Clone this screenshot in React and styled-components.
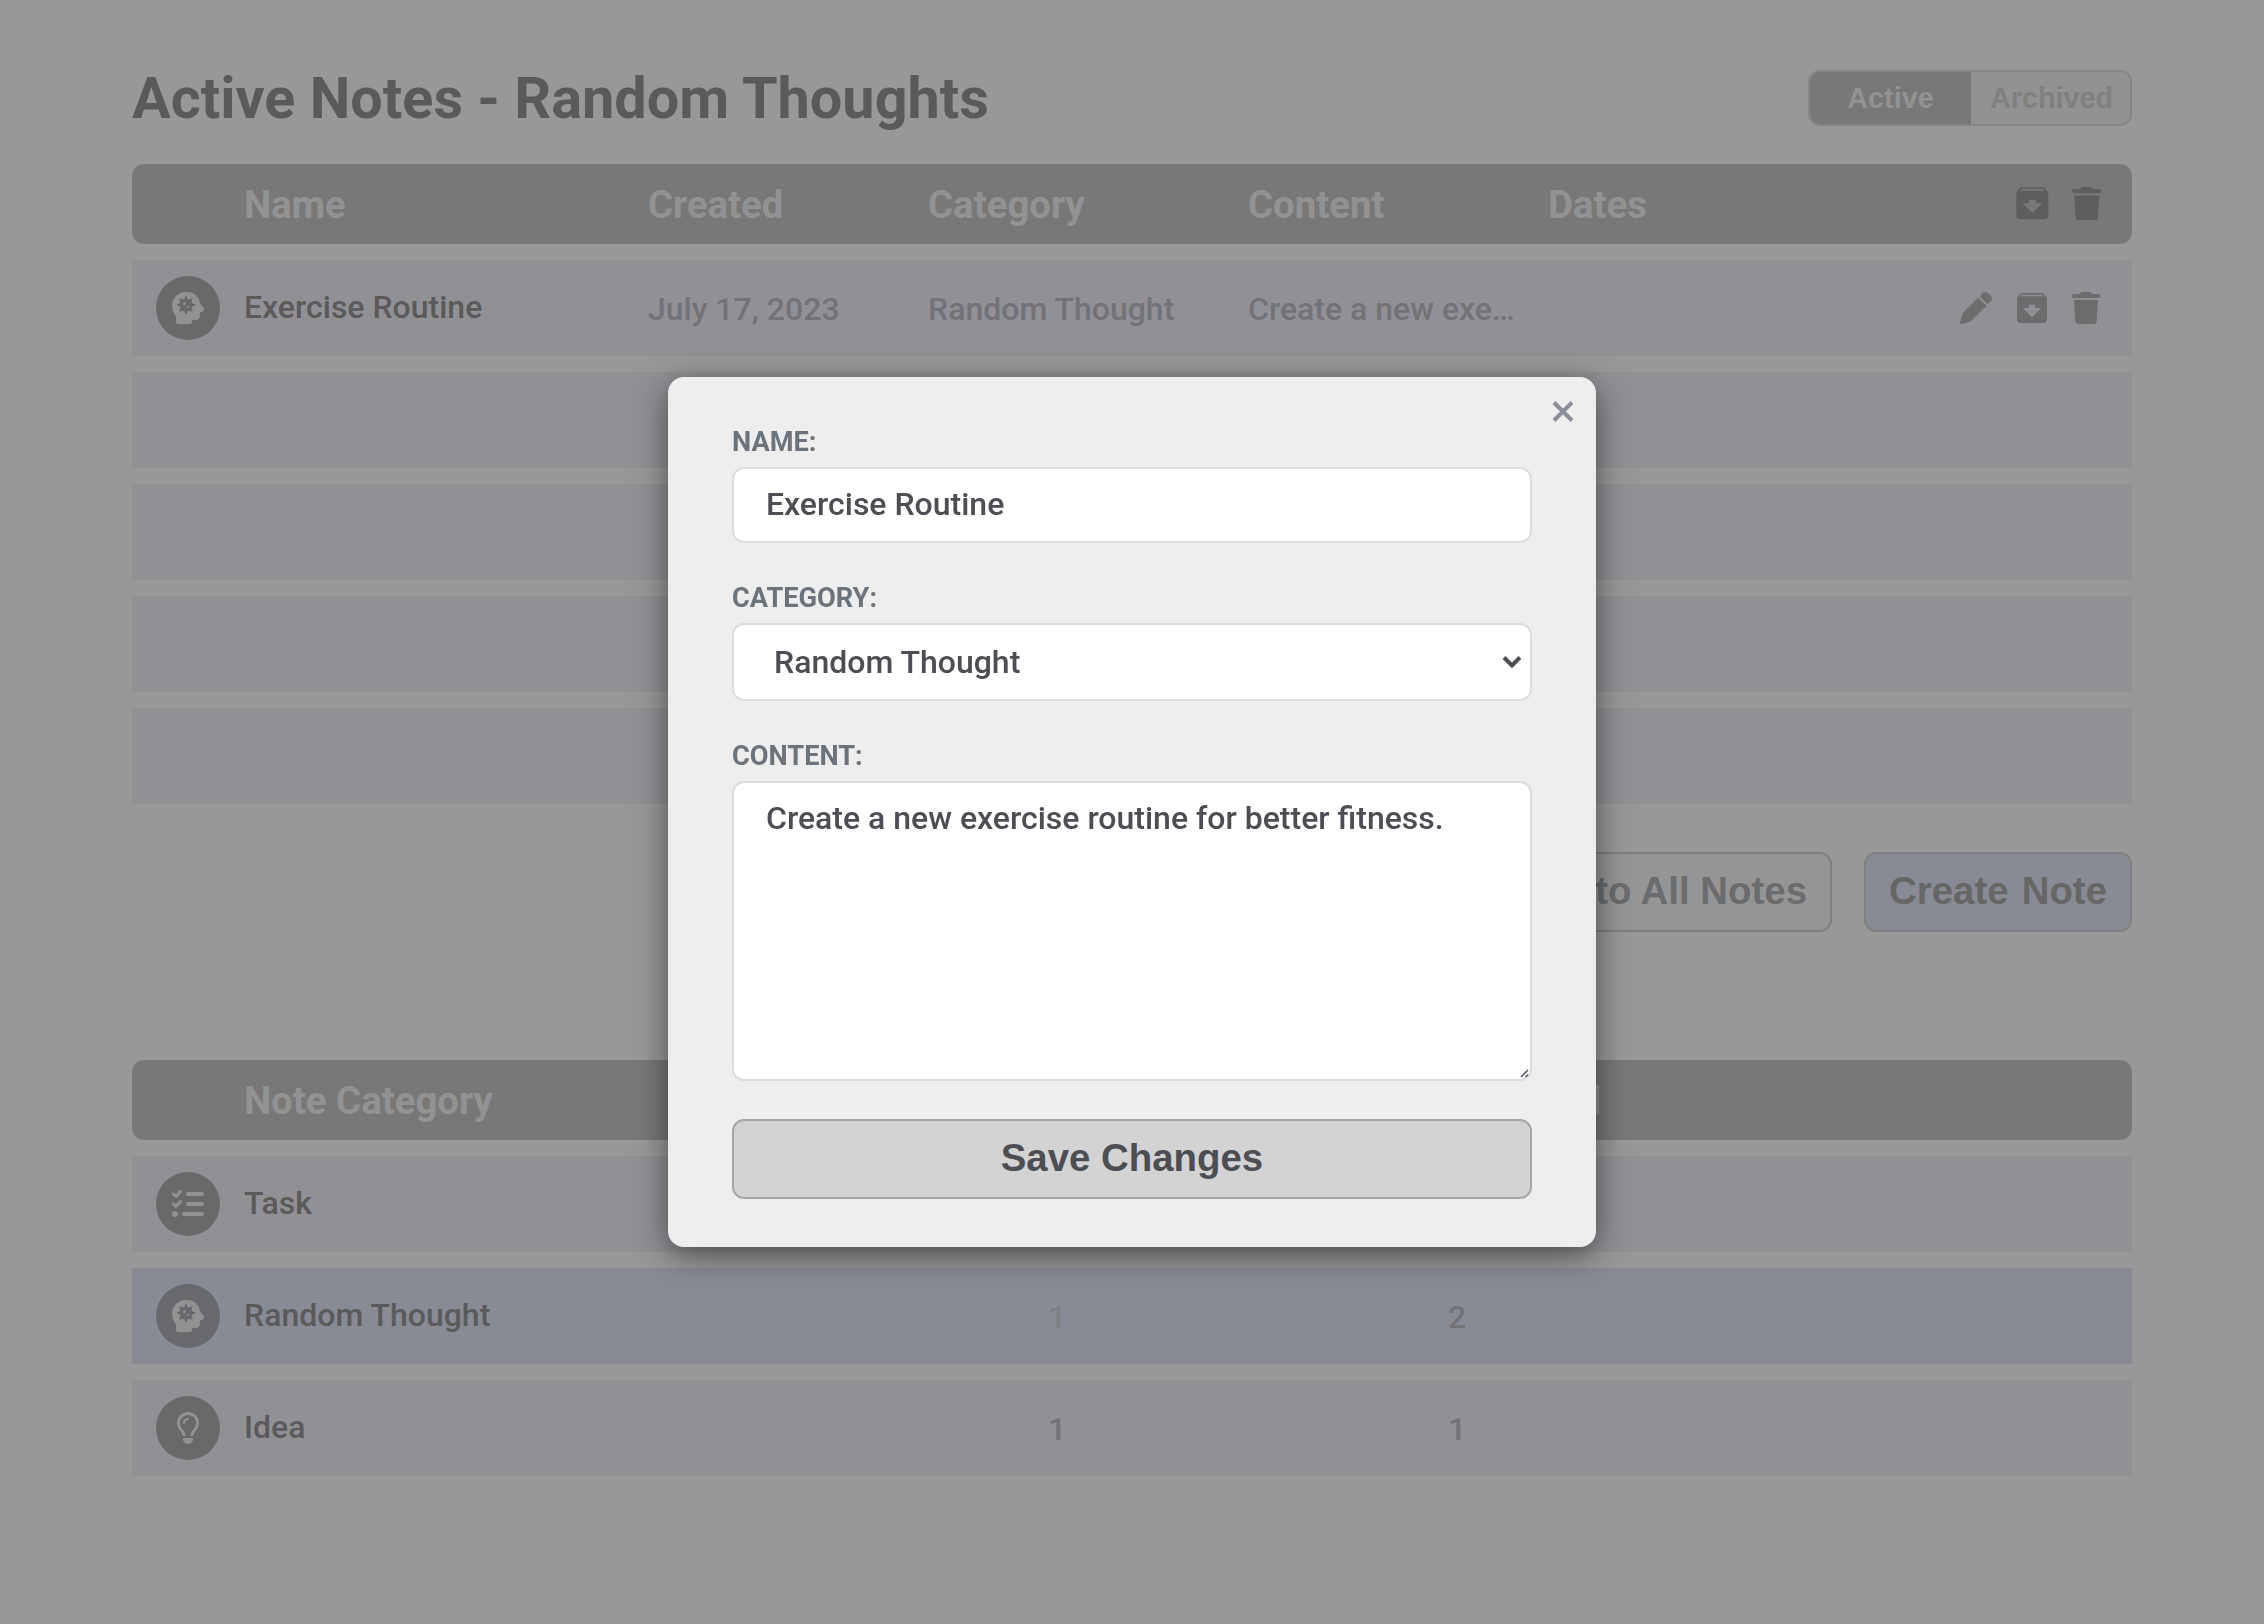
import React from "react";
import styled, { createGlobalStyle } from "styled-components";
import { FaTrash, FaPen, FaListCheck, FaRegLightbulb, FaHeadSideVirus } from "react-icons/fa6";
import { MdArchive } from "react-icons/md";

const roboto = `Roboto, "Open Sans", sans-serif`;
const arial = `"Liberation Sans", Arial, sans-serif`;

const GlobalStyle = createGlobalStyle`
  *, *::before, *::after { box-sizing: border-box; }
  body { margin: 0; background: #989898; font-family: ${roboto}; overflow: hidden; }
  h1 { margin: 0; }
  button, input, textarea { margin: 0; }
`;

const Page = styled.main`
  width: 2264px;
  height: 1624px;
  padding: 64px 132px 0;
`;

const TopBar = styled.header`
  display: flex;
  justify-content: space-between;
  align-items: center;
  height: 68px;
  margin-bottom: 32px;
`;

const Title = styled.h1`
  padding-top: 2px;
  font-size: 57.6px;
  font-weight: 700;
  line-height: 68px;
  color: #5a5a5a;
`;

const Toggle = styled.div`
  display: grid;
  grid-template-columns: 161px 1fr;
  width: 324px;
  height: 56px;
  border: 2px solid #858585;
  border-radius: 12px;
  overflow: hidden;
`;

const ToggleOption = styled.button`
  border: 0;
  padding: 0 0 0 ${(p) => (p.$on ? "0" : "2px")};
  font: bold 28.8px ${arial};
  background: ${(p) => (p.$on ? "#787878" : "#929292")};
  color: ${(p) => (p.$on ? "#929292" : "#808080")};
`;

const Table = styled.section`
  display: flex;
  flex-direction: column;
  gap: 16px;
`;

const noteColumns = "112px 404px 280px 320px 300px 1fr auto";
const categoryHeaderColumns = "112px 613px 400px 344px 1fr";
const categoryColumns = "112px 613px 400px 400px 1fr";

const HeaderRow = styled.div`
  display: grid;
  grid-template-columns: ${(p) => p.$columns};
  align-items: center;
  height: 80px;
  padding-right: 28px;
  border-radius: 12px;
  background: #787878;
  color: #929292;
  font-size: 38.4px;
  font-weight: 700;
`;

const Row = styled.div`
  display: grid;
  grid-template-columns: ${(p) => p.$columns};
  align-items: center;
  height: 96px;
  padding-right: 30px;
  background: ${(p) => (p.$selected ? "#888b94" : "#919095")};
  color: #727377;
  font-size: 32px;
  font-weight: 500;
`;

const Badge = styled.span`
  display: flex;
  align-items: center;
  justify-content: center;
  width: 64px;
  height: 64px;
  margin-left: 24px;
  border-radius: 50%;
  background: ${(p) => (p.$selected ? "#67696d" : "#696969")};
  color: #929292;
`;

const HeadCell = styled.span`
  text-align: ${(p) => p.$align || "left"};
`;

const NameCell = styled.span`
  padding-bottom: 2px;
  color: #5a5a5a;
`;

const Cell = styled.span`
  padding-top: 2px;
  white-space: nowrap;
`;

const Count = styled(Cell)`
  text-align: center;
  color: ${(p) => (p.$muted ? "#7d7f84" : "#727377")};
`;

const Actions = styled.div`
  grid-column: 7;
  display: flex;
  align-items: center;
  gap: ${(p) => (p.$header ? "17px" : "18px")};
  padding-bottom: ${(p) => (p.$header ? "1px" : "0")};
  color: ${(p) => (p.$header ? "#5e5e5e" : "#6c6c6c")};
`;

const EditIcon = styled(FaPen)`
  margin-right: 2px;
`;

const TableActions = styled.div`
  display: flex;
  justify-content: flex-end;
  gap: 32px;
  margin: 48px 0 128px;
`;

const Button = styled.button`
  height: 80px;
  padding: 0 23px 2px;
  border: 2px solid #808080;
  border-radius: 12px;
  font: bold 38.4px ${arial};
  word-spacing: ${(p) => (p.$accent ? "2.5px" : "0")};
  white-space: nowrap;
  background: ${(p) => (p.$accent ? "#888b94" : "#959595")};
  color: ${(p) => (p.$accent ? "#666665" : "#6b6c6e")};
`;

const Backdrop = styled.div`
  position: fixed;
  inset: 0;
  display: flex;
  align-items: center;
  justify-content: center;
`;

const Dialog = styled.form`
  position: relative;
  display: flex;
  flex-direction: column;
  width: 928px;
  height: 870px;
  padding: 46px 64px 0;
  border-radius: 16px;
  background: #eeeeee;
  box-shadow: 0 8px 32px rgba(0, 0, 0, 0.5);
`;

const CloseButton = styled.button`
  position: absolute;
  top: 23px;
  right: 22px;
  display: flex;
  padding: 0;
  border: 0;
  background: none;
  color: #8b8e99;
`;

const Field = styled.div`
  position: relative;
  display: flex;
  flex-direction: column;
  margin-bottom: ${(p) => p.$gap}px;
`;

const Label = styled.label`
  height: 44px;
  padding-top: 2px;
  line-height: 34px;
  font-size: 27.2px;
  font-weight: 700;
  color: #6d737a;
`;

const control = `
  width: 800px;
  border: 2px solid #dcdce3;
  border-radius: 12px;
  background: #ffffff;
  color: #4d4e54;
  font: 500 32px ${roboto};
  outline: none;
`;

const Input = styled.input`
  ${control}
  height: 76px;
  padding: 0 32px 2px;
`;

const SelectBox = styled.div`
  ${control}
  display: flex;
  align-items: center;
  justify-content: space-between;
  height: 78px;
  padding: 0 9px 0 40px;
`;

const TextArea = styled.textarea`
  ${control}
  display: block;
  height: 300px;
  padding: 16px 32px;
  resize: none;
`;

const ResizeGrip = styled.svg`
  position: absolute;
  right: 3px;
  bottom: 3px;
  width: 9px;
  height: 9px;
  color: #55565a;
`;

const SaveButton = styled.button`
  width: 800px;
  height: 80px;
  padding: 0 0 3px;
  border: 2px solid #a6a6a6;
  border-radius: 12px;
  background: #d3d3d3;
  color: #4d4e54;
  font: bold 38.4px ${arial};
`;

const categories = [
  { name: "Task", icon: FaListCheck, active: "1", archived: "1" },
  { name: "Random Thought", icon: FaHeadSideVirus, active: "1", archived: "2", selected: true },
  { name: "Idea", icon: FaRegLightbulb, active: "1", archived: "1" },
];

export default function App() {
  return (
    <>
      <GlobalStyle />
      <Page>
        <TopBar>
          <Title>Active Notes - Random Thoughts</Title>
          <Toggle>
            <ToggleOption $on>Active</ToggleOption>
            <ToggleOption>Archived</ToggleOption>
          </Toggle>
        </TopBar>
        <Table>
          <HeaderRow $columns={noteColumns}>
            <span />
            <HeadCell>Name</HeadCell>
            <HeadCell>Created</HeadCell>
            <HeadCell>Category</HeadCell>
            <HeadCell>Content</HeadCell>
            <HeadCell>Dates</HeadCell>
            <Actions $header>
              <MdArchive size={42.6} />
              <FaTrash size={33.6} />
            </Actions>
          </HeaderRow>
          <Row $columns={noteColumns}>
            <Badge><FaHeadSideVirus size={32} /></Badge>
            <NameCell>Exercise Routine</NameCell>
            <Cell>July 17, 2023</Cell>
            <Cell>Random Thought</Cell>
            <Cell>Create a new exe…</Cell>
            <Actions>
              <EditIcon size={32} />
              <MdArchive size={40} />
              <FaTrash size={32} />
            </Actions>
          </Row>
          {[1, 2, 3, 4].map((n) => <Row key={n} $columns={noteColumns} />)}
        </Table>
        <TableActions>
          <Button>Back to All Notes</Button>
          <Button $accent>Create Note</Button>
        </TableActions>
        <Table>
          <HeaderRow $columns={categoryHeaderColumns}>
            <span />
            <HeadCell>Note Category</HeadCell>
            <HeadCell $align="center">Active</HeadCell>
            <HeadCell $align="right">Archived</HeadCell>
          </HeaderRow>
          {categories.map(({ name, icon: Icon, active, archived, selected }) => (
            <Row key={name} $columns={categoryColumns} $selected={selected}>
              <Badge $selected={selected}><Icon size={32} /></Badge>
              <NameCell>{name}</NameCell>
              <Count $muted={selected}>{active}</Count>
              <Count>{archived}</Count>
            </Row>
          ))}
        </Table>
      </Page>
      <Backdrop>
        <Dialog>
          <CloseButton type="button" aria-label="Close">
            <svg width="22" height="22" viewBox="0 0 22 22" fill="none" stroke="currentColor" strokeWidth="4">
              <path d="M2 2.5l18 18M20 2.5L2 20.5" />
            </svg>
          </CloseButton>
          <Field $gap={36}>
            <Label>NAME:</Label>
            <Input defaultValue="Exercise Routine" />
          </Field>
          <Field $gap={36}>
            <Label>CATEGORY:</Label>
            <SelectBox>
              Random Thought
              <svg width="19" height="14" viewBox="0 0 19 14" fill="none" stroke="currentColor" strokeWidth="4">
                <path d="M2 2.5l8 8 8-8" />
              </svg>
            </SelectBox>
          </Field>
          <Field $gap={38}>
            <Label>CONTENT:</Label>
            <TextArea defaultValue="Create a new exercise routine for better fitness." />
            <ResizeGrip viewBox="0 0 9 9" fill="none" stroke="currentColor" strokeWidth="1.6">
              <path d="M1 8L8 1M5.5 8L8 5.5" />
            </ResizeGrip>
          </Field>
          <SaveButton type="button">Save Changes</SaveButton>
        </Dialog>
      </Backdrop>
    </>
  );
}
